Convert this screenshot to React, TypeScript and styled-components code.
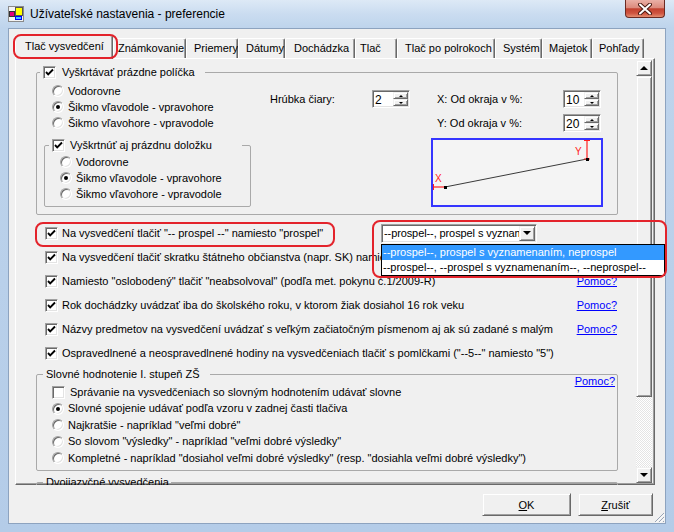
import React from 'react';
import styled, { createGlobalStyle, css } from 'styled-components';

const GlobalStyle = createGlobalStyle`
  html, body {
    margin: 0;
    padding: 0;
    background: #ffffff;
  }
  body {
    font-family: "Liberation Sans", Arial, sans-serif;
    font-size: 11px;
    color: #000;
  }
`;

const RED = '#e3232b';

const Frame = styled.div`
  width: 674px;
  height: 532px;
  display: flex;
  flex-direction: column;
  background: linear-gradient(180deg, #dde9f6 0px, #cadcf0 14px, #bed4ec 28px, #b4cce8 100%);
  overflow: hidden;
`;

const TitleBar = styled.div`
  height: 28px;
  flex-shrink: 0;
  display: flex;
  align-items: flex-start;
  padding-left: 8px;
`;

const AppIcon = styled.svg`
  margin-top: 6px;
  flex-shrink: 0;
`;

const Title = styled.div`
  margin-left: 6px;
  margin-top: 6px;
  font-size: 12px;
  line-height: 16px;
  color: #000;
  white-space: nowrap;
`;

const CloseButton = styled.div`
  margin-left: auto;
  margin-right: 9px;
  width: 40px;
  height: 18px;
  box-sizing: border-box;
  border: 1px solid #6b2a22;
  border-top: none;
  border-radius: 0 0 4px 4px;
  background: linear-gradient(180deg, #eab0a6 0%, #dc8b7d 45%, #c2412f 52%, #cf5440 78%, #e48d70 100%);
  display: flex;
  align-items: center;
  justify-content: center;
`;

const Client = styled.div`
  flex: 1;
  margin: 0 8px 8px;
  background: #f0f0f0;
  border: 1px solid #8da3bf;
  padding: 6px 10px 0 6px;
  display: flex;
  flex-direction: column;
  position: relative;
`;

const TabStrip = styled.div`
  height: 23px;
  display: flex;
  align-items: flex-end;
  flex-shrink: 0;
`;

const Tab = styled.div<{ $active?: boolean; $w: number; $pad: number }>`
  width: ${(p) => p.$w}px;
  height: ${(p) => (p.$active ? 24 : 20)}px;
  box-sizing: border-box;
  padding: ${(p) => (p.$active ? 4 : 3)}px 0 0 ${(p) => p.$pad}px;
  background: #f0f0f0;
  border-top: 1px solid #ffffff;
  border-left: 1px solid #ffffff;
  border-right: 1px solid #696969;
  box-shadow: inset -1px 0 0 #a0a0a0;
  border-radius: 2px 2px 0 0;
  line-height: 13px;
  white-space: nowrap;
  position: relative;
  ${(p) =>
    p.$active &&
    css`
      margin-bottom: -1px;
      z-index: 2;
      &::after {
        content: '';
        position: absolute;
        left: -3px;
        top: -2px;
        width: 105px;
        height: 25px;
        box-sizing: border-box;
        border: 2px solid ${RED};
        border-radius: 8px;
      }
    `}
`;

const Panel = styled.div`
  height: 427px;
  box-sizing: border-box;
  border: 1px solid;
  border-color: #ffffff #696969 #696969 #ffffff;
  box-shadow: inset -1px -1px 0 #a0a0a0;
  padding: 1px 2px 1px 1px;
  display: flex;
  flex-shrink: 0;
`;

const ScrollArea = styled.div`
  flex: 1;
  padding: 6px 0 0 19px;
  display: flex;
  flex-direction: column;
`;

const ScrollBar = styled.div`
  width: 16px;
  display: flex;
  flex-direction: column;
  flex-shrink: 0;
`;

const raised = css`
  box-sizing: border-box;
  background: #f0f0f0;
  border: 1px solid;
  border-color: #f0f0f0 #696969 #696969 #f0f0f0;
  box-shadow: inset 1px 1px 0 #ffffff, inset -1px -1px 0 #a0a0a0;
`;

const ScrollButton = styled.div<{ $down?: boolean }>`
  ${raised};
  height: 16px;
  display: flex;
  align-items: center;
  justify-content: center;
  &::before {
    content: '';
    border-left: 4px solid transparent;
    border-right: 4px solid transparent;
    ${(p) => (p.$down ? 'border-top: 4px solid #000;' : 'border-bottom: 4px solid #000;')}
  }
`;

const Thumb = styled.div`
  ${raised};
  height: 321px;
`;

const Track = styled.div`
  flex: 1;
  background-color: #ffffff;
  background-image: linear-gradient(45deg, #e4e4e4 25%, transparent 25%, transparent 75%, #e4e4e4 75%),
    linear-gradient(45deg, #e4e4e4 25%, transparent 25%, transparent 75%, #e4e4e4 75%);
  background-size: 2px 2px;
  background-position: 0 0, 1px 1px;
`;

const Group = styled.fieldset<{ $w?: number }>`
  margin: 0;
  padding: 0;
  min-width: 0;
  width: ${(p) => p.$w ?? 582}px;
  box-sizing: border-box;
  border: 1px solid #a9a9a9;
  border-radius: 2px;
  flex-shrink: 0;
`;

const Legend = styled.legend<{ $ml?: number; $pl?: number; $pr?: number }>`
  margin-left: ${(p) => p.$ml ?? 6}px;
  padding: 0 ${(p) => p.$pr ?? 10}px 0 ${(p) => p.$pl ?? 3}px;
  height: 13px;
  line-height: 13px;
`;

const LegendInner = styled.span`
  display: inline-flex;
  align-items: center;
  height: 13px;
`;

const GroupBody = styled.div`
  display: flex;
  align-items: flex-start;
  padding: 4px 0 7px;
`;

const LeftCol = styled.div`
  width: 214px;
  display: flex;
  flex-direction: column;
`;

const InnerGroup = styled(Group)`
  margin: 8px 0 0 7px;
`;

const InnerBody = styled.div`
  padding: 2px 0 4px 15px;
`;

const OptionList = styled.div<{ $indent?: number }>`
  display: flex;
  flex-direction: column;
  padding-left: ${(p) => p.$indent ?? 15}px;
`;

const OptionRow = styled.div<{ $h?: number }>`
  height: ${(p) => p.$h ?? 16}px;
  display: flex;
  align-items: center;
  white-space: nowrap;
`;

const Text = styled.span<{ $gap?: number }>`
  margin-left: ${(p) => p.$gap ?? 4}px;
  line-height: 13px;
  white-space: nowrap;
`;

const sunken = css`
  box-sizing: border-box;
  background: #ffffff;
  border: 1px solid;
  border-color: #a0a0a0 #ffffff #ffffff #a0a0a0;
  box-shadow: inset 1px 1px 0 #696969, inset -1px -1px 0 #e3e3e3;
`;

const CheckBoxBox = styled.span`
  ${sunken};
  width: 13px;
  height: 13px;
  flex-shrink: 0;
  display: inline-flex;
  align-items: center;
  justify-content: center;
`;

const RadioDot = styled.span<{ $on?: boolean }>`
  ${sunken};
  width: 12px;
  height: 12px;
  border-radius: 50%;
  flex-shrink: 0;
  display: inline-flex;
  align-items: center;
  justify-content: center;
  &::after {
    content: '';
    width: 4px;
    height: 4px;
    border-radius: 50%;
    background: ${(p) => (p.$on ? '#000' : 'transparent')};
  }
`;

const CheckBox = ({ checked }: { checked?: boolean }) => (
  <CheckBoxBox>
    {checked && (
      <svg width="9" height="9" viewBox="0 0 9 9">
        <path d="M1 4 L3.2 6.3 L8 1.5" fill="none" stroke="#000" strokeWidth="1.9" />
      </svg>
    )}
  </CheckBoxBox>
);

const ThicknessBlock = styled.div`
  margin: 7px 0 0 19px;
  display: flex;
  align-items: center;
`;

const FieldLabel = styled.span<{ $w: number }>`
  width: ${(p) => p.$w}px;
  line-height: 13px;
  white-space: nowrap;
`;

const OffsetBlock = styled.div`
  margin: 7px 0 0 21px;
  width: 172px;
  display: flex;
  flex-direction: column;
  gap: 6px;
`;

const OffsetRow = styled.div`
  display: flex;
  align-items: center;
  justify-content: space-between;
  padding: 0 2px 0 6px;
`;

const SpinBox = styled.div`
  ${sunken};
  width: 38px;
  height: 18px;
  display: flex;
  padding: 1px;
`;

const SpinValue = styled.div`
  flex: 1;
  font-size: 12px;
  line-height: 16px;
  padding-left: 1px;
`;

const SpinButtons = styled.div`
  width: 15px;
  display: flex;
  flex-direction: column;
`;

const SpinArrow = styled.div<{ $down?: boolean }>`
  ${raised};
  flex: 1;
  display: flex;
  align-items: center;
  justify-content: center;
  &::before {
    content: '';
    border-left: 2px solid transparent;
    border-right: 2px solid transparent;
    ${(p) => (p.$down ? 'border-top: 2px solid #000;' : 'border-bottom: 2px solid #000;')}
  }
`;

const Spinner = ({ value }: { value: string }) => (
  <SpinBox>
    <SpinValue>{value}</SpinValue>
    <SpinButtons>
      <SpinArrow />
      <SpinArrow $down />
    </SpinButtons>
  </SpinBox>
);

const CheckRows = styled.div`
  margin-top: 6px;
  width: 582px;
  display: flex;
  flex-direction: column;
  flex-shrink: 0;
`;

const CheckRow = styled.div<{ $marked?: boolean }>`
  height: 24px;
  display: flex;
  align-items: center;
  padding-left: 9px;
  position: relative;
  ${(p) =>
    p.$marked &&
    css`
      &::before {
        content: '';
        position: absolute;
        left: -1px;
        top: 1px;
        width: 300px;
        height: 25px;
        box-sizing: border-box;
        border: 2px solid ${RED};
        border-radius: 8px;
      }
    `}
`;

const HelpLink = styled.a<{ $mr?: number }>`
  margin-left: auto;
  margin-right: ${(p) => p.$mr ?? 1}px;
  color: #0000ff;
  text-decoration: underline;
  line-height: 13px;
  cursor: pointer;
  white-space: nowrap;
`;

const CornerHelp = styled(HelpLink)`
  align-self: flex-start;
  margin-top: -9px;
`;

const ComboWrap = styled.div`
  margin-left: auto;
  margin-right: 81px;
  position: relative;
  z-index: 5;
  &::after {
    content: '';
    position: absolute;
    left: -9px;
    top: -4px;
    width: 295px;
    height: 58px;
    box-sizing: border-box;
    border: 2px solid ${RED};
    border-radius: 8px;
  }
`;

const ComboBox = styled.div`
  ${sunken};
  width: 156px;
  height: 19px;
  display: flex;
  padding: 1px;
`;

const ComboText = styled.div`
  flex: 1;
  overflow: hidden;
  white-space: nowrap;
  line-height: 15px;
  padding-left: 1px;
  letter-spacing: -0.1px;
`;

const ComboButton = styled.div`
  ${raised};
  width: 16px;
  display: flex;
  align-items: center;
  justify-content: center;
  &::before {
    content: '';
    border-left: 4px solid transparent;
    border-right: 4px solid transparent;
    border-top: 4px solid #000;
  }
`;

const ComboList = styled.div`
  position: absolute;
  left: 0;
  top: 20px;
  width: 284px;
  box-sizing: border-box;
  border: 1px solid #000;
  background: #ffffff;
`;

const ComboItem = styled.div<{ $selected?: boolean }>`
  height: 15px;
  line-height: 15px;
  padding-left: 1px;
  white-space: nowrap;
  background: ${(p) => (p.$selected ? '#3399ff' : '#ffffff')};
  color: ${(p) => (p.$selected ? '#ffffff' : '#000')};
`;

const Group2Body = styled.div`
  padding: 3px 0 4px 15px;
  display: flex;
  flex-direction: column;
`;

const Group2 = styled(Group)`
  margin-top: 3px;
`;

const ClipBox = styled.div`
  margin-top: 5px;
  height: 9px;
  overflow: hidden;
  flex-shrink: 0;
`;

const ButtonRow = styled.div`
  margin-top: 8px;
  display: flex;
  justify-content: flex-end;
  gap: 7px;
  padding-right: 2px;
`;

const DialogButton = styled.button<{ $w: number }>`
  ${raised};
  width: ${(p) => p.$w}px;
  height: 23px;
  font: inherit;
  color: #000;
  padding: 0;
`;

const Grip = styled.svg`
  position: absolute;
  right: 0;
  bottom: 0;
`;

const tabs = [
  { label: 'Tlač vysvedčení', w: 98, pad: 9 },
  { label: 'Známkovanie', w: 73, pad: 4 },
  { label: 'Priemery', w: 52, pad: 7 },
  { label: 'Dátumy', w: 47, pad: 7 },
  { label: 'Dochádzka', w: 70, pad: 8 },
  { label: 'Tlač', w: 42, pad: 4 },
  { label: 'Tlač po polrokoch', w: 98, pad: 7 },
  { label: 'Systém', w: 47, pad: 7 },
  { label: 'Majetok', w: 50, pad: 6 },
  { label: 'Pohľady', w: 52, pad: 6 },
];

const Diagram = () => (
  <svg width="172" height="69" viewBox="0 0 172 69">
    <rect x="1" y="1" width="170" height="67" fill="#f4f4f4" stroke="#3535ff" strokeWidth="2" />
    <line x1="14" y1="49" x2="156" y2="21" stroke="#3a3a3a" strokeWidth="1" />
    <line x1="2" y1="49" x2="14" y2="49" stroke="#ff1f1f" strokeWidth="1.2" />
    <line x1="2.5" y1="46" x2="2.5" y2="52" stroke="#ff1f1f" />
    <text x="4" y="44" fill="#ff1f1f" fontSize="10" fontFamily="Liberation Sans, Arial, sans-serif">
      X
    </text>
    <line x1="156" y1="2" x2="156" y2="21" stroke="#ff1f1f" strokeWidth="1.2" />
    <line x1="153" y1="2.5" x2="159" y2="2.5" stroke="#ff1f1f" />
    <line x1="153" y1="21" x2="159" y2="21" stroke="#ff1f1f" />
    <text x="144" y="17" fill="#ff1f1f" fontSize="10" fontFamily="Liberation Sans, Arial, sans-serif">
      Y
    </text>
    <rect x="13" y="48" width="3" height="3" fill="#000" />
    <rect x="155" y="20" width="3" height="3" fill="#000" />
  </svg>
);

const App = () => (
  <>
    <GlobalStyle />
    <Frame>
      <TitleBar>
        <AppIcon width="16" height="16" viewBox="0 0 16 16">
          <rect x="0.5" y="0.5" width="15" height="15" fill="#f4f4f4" stroke="#8a8a8a" />
          <rect x="7.5" y="1.5" width="7" height="8" fill="#ffff00" stroke="#555" />
          <rect x="1.5" y="5.5" width="5" height="5" fill="#e4007c" stroke="#333" />
          <rect x="7.5" y="10.5" width="6" height="3" fill="#3cc8ff" stroke="#0000ff" />
        </AppIcon>
        <Title>Užívateľské nastavenia - preferencie</Title>
        <CloseButton>
          <svg width="14" height="12" viewBox="0 0 14 12">
            <path d="M2 1.5 L12 10.5 M12 1.5 L2 10.5" stroke="#4a1a12" strokeWidth="4" strokeLinecap="round" />
            <path d="M2 1.5 L12 10.5 M12 1.5 L2 10.5" stroke="#ffffff" strokeWidth="2" strokeLinecap="round" />
          </svg>
        </CloseButton>
      </TitleBar>

      <Client>
        <TabStrip>
          {tabs.map((t, i) => (
            <Tab key={t.label} $w={t.w} $pad={t.pad} $active={i === 0}>
              {t.label}
            </Tab>
          ))}
        </TabStrip>

        <Panel>
          <ScrollArea>
            <Group $w={582}>
              <Legend $ml={3} $pl={3} $pr={10}>
                <LegendInner>
                  <CheckBox checked />
                  <Text $gap={6}>Vyškrtávať prázdne políčka</Text>
                </LegendInner>
              </Legend>
              <GroupBody>
                <LeftCol>
                  <OptionList>
                    <OptionRow>
                      <RadioDot />
                      <Text>Vodorovne</Text>
                    </OptionRow>
                    <OptionRow>
                      <RadioDot $on />
                      <Text>Šikmo vľavodole - vpravohore</Text>
                    </OptionRow>
                    <OptionRow>
                      <RadioDot />
                      <Text>Šikmo vľavohore - vpravodole</Text>
                    </OptionRow>
                  </OptionList>
                  <InnerGroup $w={207}>
                    <Legend $ml={4} $pl={3} $pr={30}>
                      <LegendInner>
                        <CheckBox checked />
                        <Text $gap={5}>Vyškrtnúť aj prázdnu doložku</Text>
                      </LegendInner>
                    </Legend>
                    <InnerBody>
                      <OptionRow>
                        <RadioDot />
                        <Text>Vodorovne</Text>
                      </OptionRow>
                      <OptionRow>
                        <RadioDot $on />
                        <Text>Šikmo vľavodole - vpravohore</Text>
                      </OptionRow>
                      <OptionRow>
                        <RadioDot />
                        <Text>Šikmo vľavohore - vpravodole</Text>
                      </OptionRow>
                    </InnerBody>
                  </InnerGroup>
                </LeftCol>

                <ThicknessBlock>
                  <FieldLabel $w={102}>Hrúbka čiary:</FieldLabel>
                  <Spinner value="2" />
                </ThicknessBlock>

                <OffsetBlock>
                  <OffsetRow>
                    <FieldLabel $w={120}>X: Od okraja v %:</FieldLabel>
                    <Spinner value="10" />
                  </OffsetRow>
                  <OffsetRow>
                    <FieldLabel $w={120}>Y: Od okraja v %:</FieldLabel>
                    <Spinner value="20" />
                  </OffsetRow>
                  <Diagram />
                </OffsetBlock>
              </GroupBody>
            </Group>

            <CheckRows>
              <CheckRow $marked>
                <CheckBox checked />
                <Text>Na vysvedčení tlačiť "-- prospel --" namiesto "prospel"</Text>
                <ComboWrap>
                  <ComboBox>
                    <ComboText>--prospel--, prospel s vyznamenaním, neprospel</ComboText>
                    <ComboButton />
                  </ComboBox>
                  <ComboList>
                    <ComboItem $selected>--prospel--, prospel s vyznamenaním, neprospel</ComboItem>
                    <ComboItem>--prospel--, --prospel s vyznamenaním--, --neprospel--</ComboItem>
                  </ComboList>
                </ComboWrap>
              </CheckRow>
              <CheckRow>
                <CheckBox checked />
                <Text>Na vysvedčení tlačiť skratku štátneho občianstva (napr. SK) namiesto celého názvu</Text>
              </CheckRow>
              <CheckRow>
                <CheckBox checked />
                <Text>Namiesto "oslobodený" tlačiť "neabsolvoval" (podľa met. pokynu č.1/2009-R)</Text>
                <HelpLink>Pomoc?</HelpLink>
              </CheckRow>
              <CheckRow>
                <CheckBox checked />
                <Text>Rok dochádzky uvádzať iba do školského roku, v ktorom žiak dosiahol 16 rok veku</Text>
                <HelpLink>Pomoc?</HelpLink>
              </CheckRow>
              <CheckRow>
                <CheckBox checked />
                <Text>Názvy predmetov na vysvedčení uvádzať s veľkým začiatočným písmenom aj ak sú zadané s malým</Text>
                <HelpLink>Pomoc?</HelpLink>
              </CheckRow>
              <CheckRow>
                <CheckBox checked />
                <Text>Ospravedlnené a neospravedlnené hodiny na vysvedčeniach tlačiť s pomlčkami ("--5--" namiesto "5")</Text>
              </CheckRow>
            </CheckRows>

            <Group2 $w={582}>
              <Legend $ml={6} $pl={3} $pr={10}>
                Slovné hodnotenie I. stupeň ZŠ
              </Legend>
              <Group2Body>
                <OptionRow>
                  <CheckBox />
                  <Text $gap={5}>Správanie na vysvedčeniach so slovným hodnotením udávať slovne</Text>
                  <CornerHelp $mr={2}>Pomoc?</CornerHelp>
                </OptionRow>
                <OptionRow $h={17}>
                  <RadioDot $on />
                  <Text>Slovné spojenie udávať podľa vzoru v zadnej časti tlačiva</Text>
                </OptionRow>
                <OptionRow>
                  <RadioDot />
                  <Text>Najkratšie - napríklad "veľmi dobré"</Text>
                </OptionRow>
                <OptionRow $h={17}>
                  <RadioDot />
                  <Text>So slovom "výsledky" - napríklad "veľmi dobré výsledky"</Text>
                </OptionRow>
                <OptionRow>
                  <RadioDot />
                  <Text>Kompletné - napríklad "dosiahol veľmi dobré výsledky" (resp. "dosiahla veľmi dobré výsledky")</Text>
                </OptionRow>
              </Group2Body>
            </Group2>

            <ClipBox>
              <Group $w={582}>
                <Legend $ml={6} $pl={3} $pr={2}>
                  Dvojjazyčné vysvedčenia
                </Legend>
                <Group2Body />
              </Group>
            </ClipBox>
          </ScrollArea>

          <ScrollBar>
            <ScrollButton />
            <Thumb />
            <Track />
            <ScrollButton $down />
          </ScrollBar>
        </Panel>

        <ButtonRow>
          <DialogButton $w={89}>
            <u>O</u>K
          </DialogButton>
          <DialogButton $w={75}>
            <u>Z</u>rušiť
          </DialogButton>
        </ButtonRow>

        <Grip width="13" height="13" viewBox="0 0 13 13">
          <path d="M12 3 L3 12 M12 7 L7 12 M12 11 L11 12" stroke="#9aa5b5" strokeWidth="1" />
          <path d="M12.8 3.8 L3.8 12.8 M12.8 7.8 L7.8 12.8" stroke="#ffffff" strokeWidth="1" />
        </Grip>
      </Client>
    </Frame>
  </>
);

export default App;
